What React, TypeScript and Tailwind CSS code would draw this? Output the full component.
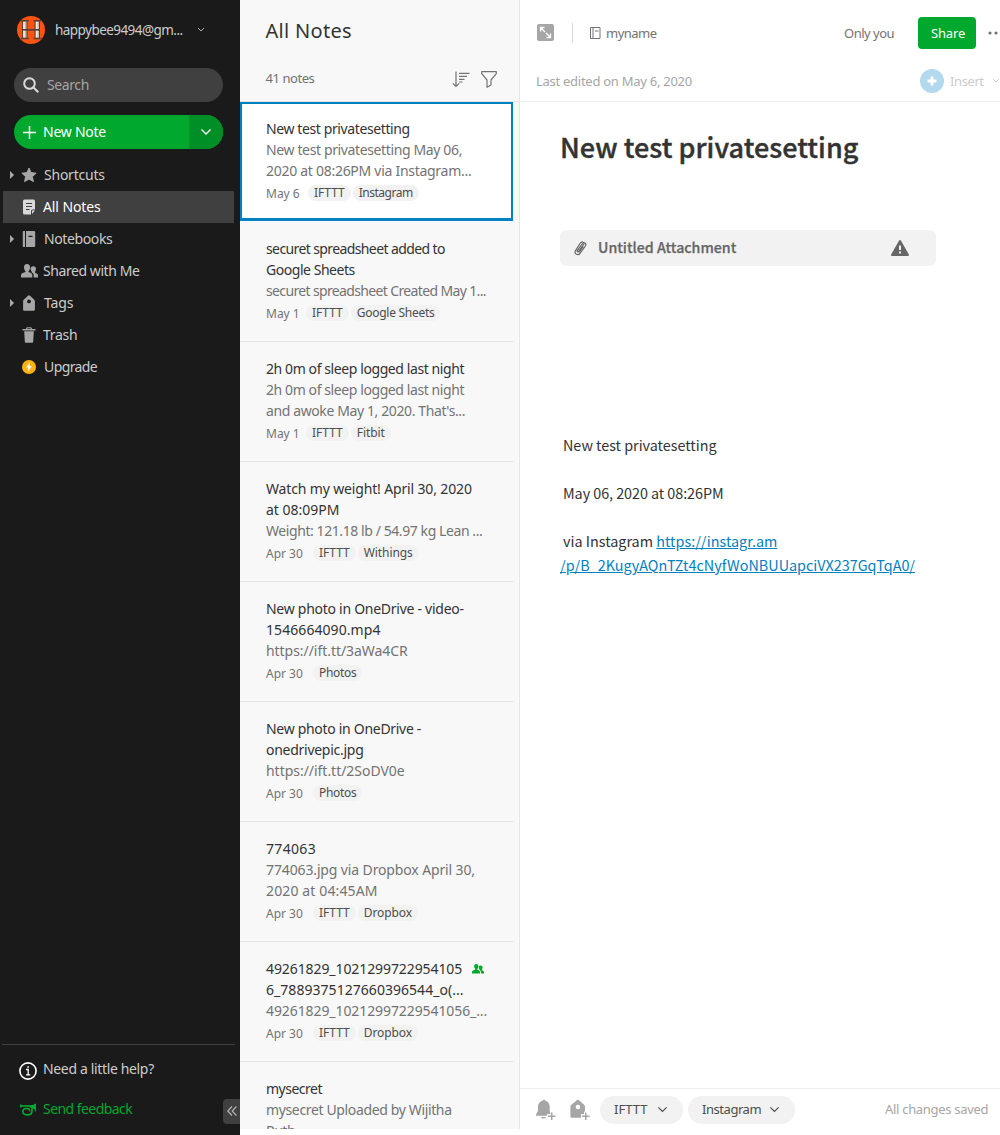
import React from "react";

/** A line of text with its letter spacing in pixels. */
type Line = [text: string, tracking: number];
type Note = { title: Line[]; body: Line[]; date?: string; tags: string[]; shared?: boolean };

const notes: Note[] = [
  { title: [["New test privatesetting", -0.39]], body: [["New test privatesetting May 06,", -0.37], ["2020 at 08:26PM via Instagram...", -0.28]], date: "May 6", tags: ["IFTTT", "Instagram"] },
  { title: [["securet spreadsheet added to", -0.61], ["Google Sheets", -0.46]], body: [["securet spreadsheet Created May 1...", -0.64]], date: "May 1", tags: ["IFTTT", "Google Sheets"] },
  { title: [["2h 0m of sleep logged last night", -0.41]], body: [["2h 0m of sleep logged last night", -0.41], ["and awoke May 1, 2020. That's...", -0.39]], date: "May 1", tags: ["IFTTT", "Fitbit"] },
  { title: [["Watch my weight! April 30, 2020", -0.15], ["at 08:09PM", 0]], body: [["Weight: 121.18 lb / 54.97 kg Lean ...", -0.42]], date: "Apr 30", tags: ["IFTTT", "Withings"] },
  { title: [["New photo in OneDrive - video-", -0.27], ["1546664090.mp4", 0.07]], body: [["https://ift.tt/3aWa4CR", -0.05]], date: "Apr 30", tags: ["Photos"] },
  { title: [["New photo in OneDrive -", -0.3], ["onedrivepic.jpg", -0.27]], body: [["https://ift.tt/2SoDV0e", -0.03]], date: "Apr 30", tags: ["Photos"] },
  { title: [["774063", 0.33]], body: [["774063.jpg via Dropbox April 30,", -0.13], ["2020 at 04:45AM", 0.13]], date: "Apr 30", tags: ["IFTTT", "Dropbox"] },
  { title: [["49261829_1021299722954105", -0.09], ["6_7889375127660396544_o(...", 0.04]], body: [["49261829_10212997229541056_...", -0.09]], date: "Apr 30", tags: ["IFTTT", "Dropbox"], shared: true },
  { title: [["mysecret", -0.5]], body: [["mysecret Uploaded by Wijitha", -0.36], ["Ruth", -0.5]], tags: [] },
];

const dateWidth: Record<string, string> = { "May 6": "w-[42px]", "May 1": "w-[40px]", "Apr 30": "w-[47px]" };
const tagTracking: Record<string, string> = {
  IFTTT: "",
  Instagram: "tracking-[-0.5px]",
  "Google Sheets": "tracking-[-0.28px]",
  Photos: "tracking-[-0.3px]",
};

function Chevron({ className = "" }: { className?: string }) {
  return (
    <svg viewBox="0 0 12 8" className={className} fill="none" stroke="currentColor" strokeWidth="1.3">
      <path d="M1.5 1.500 6 6l4.500-4.500" />
    </svg>
  );
}

function People({ className = "" }: { className?: string }) {
  return (
    <svg viewBox="0 0 17 14" className={className} fill="currentColor">
      <path d="M6 0C3.900 0 2.800 1.600 3 3.700c.1 1.500.7 2.600 1.400 3.200v1.200C2.600 8.800.3 9.300 0 11v2.600h11.300V11c-.3-1.700-2-2.200-3.700-2.900V6.900C8.400 6.300 9 5.200 9.100 3.700 9.200 1.600 8.100 0 6 0Z" />
      <path d="M12.200 2.200c-1.700 0-2.700 1.200-2.600 2.900.1 1.100.5 1.900 1.100 2.500v.8c1.200.6 1.900 1.400 2 2.600v2.600H17V11c-.2-1.300-1.500-1.700-3-2.300v-1c.6-.6 1-1.500 1-2.600.1-1.700-1-2.900-2.800-2.900Z" />
    </svg>
  );
}

const StarIcon = (
  <svg width="16" height="16" viewBox="0 0 16 16" fill="currentColor" stroke="currentColor" strokeLinejoin="round">
    <path d="m8 1 2.100 4.600 5 .6-3.700 3.400 1 5L8 12.100l-4.400 2.500 1-5L.9 6.200l5-.6Z" />
  </svg>
);
const NoteIcon = (
  <svg width="14" height="16" viewBox="0 0 14 16" fill="currentColor">
    <path fillRule="evenodd" d="M2.500.500h9A1.500 1.500 0 0 1 13 2v8.500h-2.500A1.500 1.500 0 0 0 9 12v3.500H2.500A1.500 1.500 0 0 1 1 14V2A1.500 1.500 0 0 1 2.500.500ZM4 4v1h6V4Zm0 3v1h6V7Zm0 3v1h3.500v-1Z" />
    <path d="M10 11.500h3L10 15Z" />
  </svg>
);
const BookIcon = (
  <svg width="14" height="16" viewBox="0 0 14 16" fill="currentColor">
    <path d="M1.500 0H3v16H1.500A.7.700 0 0 1 .8 15.300V.7A.7.700 0 0 1 1.500 0Z" />
    <path fillRule="evenodd" d="M4 0h8a1.200 1.200 0 0 1 1.200 1.200v13.600A1.200 1.200 0 0 1 12 16H4ZM6.500 4.700v1.400h4V4.700Z" />
  </svg>
);
const TagIcon = (
  <svg width="14" height="16" viewBox="0 0 14 16" fill="currentColor">
    <path fillRule="evenodd" d="M6 .7a1.500 1.500 0 0 1 2 0l4.300 4c.4.400.6.900.6 1.400v8.400c0 .8-.5 1.300-1.300 1.300H2.400c-.8 0-1.300-.5-1.300-1.300V6.100c0-.5.200-1 .6-1.400ZM7 4.500a1.900 1.900 0 1 0 0 3.800 1.900 1.900 0 0 0 0-3.800Z" />
  </svg>
);
const TrashIcon = (
  <svg width="14" height="16" viewBox="0 0 14 16" fill="currentColor">
    <path d="M5.500.300h3c1 0 1.500.7 1.500 1.700h3.500v1.500H.500V2H4C4 1 4.500.300 5.500.300Zm.2 1L5.300 2h3.400l-.4-.7Z" fillRule="evenodd" />
    <path d="M2.200 4.300h9.600l-.6 10.200c0 .8-.5 1.300-1.200 1.300H4c-.7 0-1.200-.5-1.200-1.300Z" />
  </svg>
);
const UpgradeIcon = (
  <svg width="14" height="14" viewBox="0 0 14 14">
    <circle cx="7" cy="7" r="7" fill="#ffb30f" />
    <path d="M7.900 2.400 4.100 7.600h2.200l-.3 4 3.900-5.400H7.600Z" fill="#fff" />
  </svg>
);

const nav = [
  { label: "Shortcuts", icon: StarIcon, arrow: true, text: "pl-1.5 tracking-[-0.23px]" },
  { label: "All Notes", icon: NoteIcon, active: true, text: "pl-[5px] tracking-[-0.1px]" },
  { label: "Notebooks", icon: BookIcon, arrow: true, text: "pl-1.5 tracking-[-0.38px]" },
  { label: "Shared with Me", icon: <People className="h-3.5 w-[17px]" />, text: "pl-[5px] tracking-[-0.43px]" },
  { label: "Tags", icon: TagIcon, arrow: true, text: "pl-1.5 tracking-[-0.1px]" },
  { label: "Trash", icon: TrashIcon, text: "pl-[5px] tracking-[-0.3px]" },
  { label: "Upgrade", icon: UpgradeIcon, text: "pl-1.5 tracking-[-0.6px]" },
];

function Avatar() {
  return (
    <svg width="28" height="28" viewBox="0 0 28 28" className="shrink-0">
      <circle cx="14" cy="14" r="14" fill="#fb5310" />
      <path d="M5.500 4.500H10v18H5.500ZM18 4.500h4.500v18H18Z" fill="#bdb9ad" stroke="#6b3a2b" />
      <path d="M7 6v15.500M19.800 6v15.500" stroke="#f4efe2" strokeWidth="1.600" />
      <path d="M5.500 13.800h17" stroke="#4a3f3a" strokeWidth="1.600" />
      <path d="M3.800 4.700h8M16.500 4.700h8M3.800 22.500h8M16.500 22.500h8" stroke="#5a4038" strokeWidth="1.500" />
    </svg>
  );
}

function Sidebar() {
  return (
    <aside className="flex w-60 shrink-0 flex-col bg-[#1a1a1a] text-[14px] text-[#ccc]">
      <div className="flex h-[60px] items-center pl-[17px]">
        <Avatar />
        <span className="mt-px ml-2.5 w-[132px] text-[13.5px] tracking-[-0.55px] whitespace-nowrap">happybee9494@gm...</span>
        <Chevron className="ml-2.5 w-2" />
      </div>
      <div className="mt-2 ml-3.5 flex h-[34px] w-[209px] items-center rounded-full bg-[#404040] text-[#a6a6a6]">
        <svg width="16" height="16" viewBox="0 0 16 16" className="ml-[9px] text-[#d9d9d9]" fill="none" stroke="currentColor" strokeWidth="2">
          <circle cx="6.500" cy="6.500" r="5.300" />
          <path d="m10.500 10.500 4.800 4.800" />
        </svg>
        <span className="-mt-px ml-2 tracking-[-0.4px]">Search</span>
      </div>
      <div className="mt-[13px] ml-3.5 flex h-[34px] w-[209px] overflow-hidden rounded-full bg-[#00a82d] text-white">
        <div className="flex w-[175px] items-center pl-[9px]">
          <svg width="13" height="13" viewBox="0 0 13 13" stroke="white" strokeWidth="1.500"><path d="M6.500 0v13M0 6.500h13" /></svg>
          <span className="-mt-px ml-[7px] tracking-[-0.25px]">New Note</span>
        </div>
        <div className="flex flex-1 items-center justify-center bg-[#008f26]"><Chevron className="w-3" /></div>
      </div>
      <nav className="mt-2.5 flex flex-col">
        {nav.map((n) => (
          <div key={n.label} className={n.active ? "ml-[3px] flex h-8 w-[231px] items-center bg-[#404040] text-white" : "ml-[3px] flex h-8 w-[231px] items-center"}>
            <span className="flex w-[17px] pl-[7px] text-[#ababab]">
              {n.arrow && <svg width="4" height="8" viewBox="0 0 4 8" fill="currentColor"><path d="m0 0 4 4-4 4Z" /></svg>}
            </span>
            <span className={n.active ? "flex w-[18px] justify-center text-[#d9d9d9]" : "flex w-[18px] justify-center text-[#a6a6a6]"}>{n.icon}</span>
            <span className="-mt-px"><span className={n.text}>{n.label}</span></span>
          </div>
        ))}
      </nav>
      <div className="mt-auto ml-0.5 h-[91px] w-[233px] border-t border-[#404040]">
        <div className="flex h-[50px] items-center pl-[17px]">
          <svg width="18" height="18" viewBox="0 0 18 18" className="mt-px" fill="none" stroke="#fff" strokeWidth="1.600">
            <circle cx="9" cy="9" r="8.100" />
            <path d="M7 7.500h2.200v5M7 12.900h4.300" strokeWidth="1.300" />
            <path d="M8.300 4.200h1.600v1.500H8.300Z" fill="#fff" stroke="none" />
          </svg>
          <span className="-mt-1 ml-1.5 tracking-[-0.35px]">Need a little help?</span>
        </div>
        <div className="flex h-[30px] items-center pl-[18px] text-[#00a82d]">
          <svg width="16" height="13" viewBox="0 0 16 13" className="-mt-px" fill="none" stroke="currentColor">
            <path d="M.500 3h8" strokeWidth="1.600" />
            <path d="M8 2.300c3.500 0 5.500-.5 8-1.800v9c-.8-2.500-2-4-4.200-4.600L8 3.800Z" fill="currentColor" stroke="none" />
            <path d="M12 4.500v3.300c0 2.300-1.500 4-3.700 4H6.500c-2.200 0-3.700-1.400-3.700-3.300S4.200 5.500 6 5.500h1.800c1.100 0 1.700.6 1.700 1.500v1.300" strokeWidth="1.700" />
            <path d="M.8 1.500v3" strokeWidth="1.500" />
          </svg>
          <span className="-mt-1 ml-[7px] tracking-[-0.55px]">Send feedback</span>
          <span className="ml-auto -mr-[5px] flex h-[25px] w-[17px] translate-y-px items-center justify-center rounded-l bg-[#404040] text-[#b5b5b5]">
            <svg width="10" height="10" viewBox="0 0 10 10" fill="none" stroke="currentColor" strokeWidth="1.200"><path d="M5 .5.8 5 5 9.500M9.400.5 5.200 5l4.200 4.500" /></svg>
          </span>
        </div>
      </div>
    </aside>
  );
}

function NoteCard({ note, selected }: { note: Note; selected: boolean }) {
  return (
    <div className={selected ? "mb-px h-[119px] w-[273px] shrink-0 border-2 border-b-[3px] border-[#0081c2] bg-white pt-[14px] pl-6" : "h-[120px] w-[273px] shrink-0 border-b border-[#e3e3e3] pt-4 pl-[26px]"}>
      <div className="relative h-[63px] text-[14px] leading-[21px] whitespace-nowrap text-[#737373]">
        {note.title.map(([text, tracking]) => <div key={text} className="text-[#333]" style={{ letterSpacing: tracking }}>{text}</div>)}
        {note.body.map(([text, tracking]) => <div key={text} style={{ letterSpacing: tracking }}>{text}</div>)}
        {note.shared && <People className="absolute top-[6px] left-[206px] w-3 text-[#00a82d]" />}
      </div>
      {note.date && (
        <div className="mt-1 flex h-4 text-[12px] leading-4 whitespace-nowrap text-[#737373]">
          <span className={dateWidth[note.date]}><span className="relative top-px">{note.date}</span></span>
          {note.tags.map((t) => (
            <span key={t} className="mr-0.5 rounded-full bg-[#f2f2f2] px-1.5 text-[#4d4d4d]"><span className={tagTracking[t] ?? "tracking-[-0.1px]"}>{t}</span></span>
          ))}
        </div>
      )}
    </div>
  );
}

function NoteList() {
  return (
    <section className="flex h-[1129px] w-[280px] shrink-0 flex-col overflow-hidden border-r border-[#e6e6e6] bg-[#f8f8f8]">
      <div className="h-[102px] shrink-0 border-b border-[#e6e6e6] pt-[17px]">
        <h1 className="ml-[25.5px] text-[20px] leading-7 tracking-[0.3px] text-[#333]">All Notes</h1>
        <div className="mt-5 flex h-7 items-center pl-[25.5px] text-[13px] text-[#737373]">
          <span className="w-[186px] tracking-[-0.45px]">41 notes</span>
          <svg width="18" height="17" viewBox="0 0 18 17" fill="none" stroke="currentColor" strokeWidth="1.200">
            <path d="M4 .5v15M.8 12.300 4 15.500l3.200-3.200M7 2.300h10.500M7 5.300h8M7 8.300h5.500M7 11h3.500" />
          </svg>
          <svg width="16" height="17" viewBox="0 0 16 17" className="ml-[11px]" fill="none" stroke="currentColor" strokeWidth="1.200" strokeLinejoin="round">
            <path d="M.7.700h14.600v2L10 9v5l-4 2.300V9L.7 2.700Z" />
          </svg>
        </div>
      </div>
      {notes.map((n, i) => <NoteCard key={i} note={n} selected={i === 0} />)}
    </section>
  );
}

function Editor() {
  return (
    <main className="flex min-w-0 flex-1 flex-col overflow-hidden bg-white text-[13px] text-[#737373]">
      <header className="h-[102px] shrink-0 border-b border-[#ededed]">
        <div className="flex h-[66px] items-center pl-[17px]">
          <svg width="17" height="17" viewBox="0 0 17 17" className="-mt-0.5 shrink-0">
            <rect width="17" height="17" rx="2" fill="#a6a6a6" />
            <path d="M3.500 7.500v-4h4M4 4l4 4M9.500 13.500h4v-4M9 9l4 4" stroke="#fff" strokeWidth="1.300" fill="none" />
          </svg>
          <span className="ml-[18px] h-5 w-px shrink-0 bg-[#d9d9d9]" />
          <svg width="11" height="12" viewBox="0 0 11 12" className="ml-[17px] shrink-0" fill="none" stroke="currentColor">
            <path d="M.5.500h9.500v11H.5ZM3 .5v11M5 4h3.500" />
          </svg>
          <span className="mt-px ml-[5px] w-[238px] shrink-0 tracking-[-0.5px]">myname</span>
          <span className="mt-px w-[51px] shrink-0 tracking-[-0.5px] whitespace-nowrap">Only you</span>
          <span className="ml-[23px] flex h-8 w-[58px] shrink-0 items-center justify-center rounded bg-[#00a82d] pt-px pl-0.5 tracking-[-0.15px] text-white">Share</span>
          <svg width="12" height="4" viewBox="0 0 12 4" className="ml-3 shrink-0" fill="currentColor"><circle cx="2" cy="2" r="1.600" /><circle cx="8" cy="2" r="1.600" /></svg>
        </div>
        <div className="flex h-[30px] items-center pl-4 text-[#a6a6a6]">
          <span className="mt-px w-[384px] shrink-0 tracking-[-0.27px]">Last edited on May 6, 2020</span>
          <svg width="24" height="24" viewBox="0 0 24 24" className="shrink-0"><circle cx="12" cy="12" r="12" fill="#b2d9ed" /><path d="M12 7.500v9M7.500 12h9" stroke="#fff" strokeWidth="2.800" /></svg>
          <span className="mt-px ml-1.5 w-[42px] shrink-0 tracking-[-0.4px] text-[#ccc]">Insert</span>
          <Chevron className="w-2 shrink-0 text-[#ccc]" />
        </div>
      </header>
      <div className="flex flex-1 flex-col pl-10 font-['Noto_Sans_CJK_SC',sans-serif]">
        <h2 className="mt-[25px] text-[27px] leading-10 font-medium tracking-[0.03px] text-[#333] [-webkit-text-stroke:0.4px_#333]">New test privatesetting</h2>
        <div className="mt-[63px] flex h-9 w-[376px] items-center rounded-md bg-[#f2f2f2] pl-3.5 text-[14.2px] font-medium text-[#666] [-webkit-text-stroke:0.25px_#666]">
          <svg width="13" height="15" viewBox="0 0 13 15" fill="none" stroke="#666" strokeWidth="1.200" strokeLinecap="round">
            <path d="m10 3-5.500 7.500c-.5.700-1.700 0-1.200-.8L8.500 2.500C9.500 1 12.700 2 11.700 4.500L6 12.500c-2 2.300-5.800.5-4.700-2.500L6 2.500c.7-1 1.500-1.700 2.700-1.500M9 6l-3.700 5" />
          </svg>
          <span className="ml-[11px]">Untitled Attachment</span>
          <svg width="18" height="16" viewBox="0 0 18 16" className="mr-[27px] ml-auto">
            <path d="M9 1 17 15H1Z" fill="#666" stroke="#666" strokeWidth="2" strokeLinejoin="round" /><path d="M8 5.500h2V10H8ZM8 11.500h2v2H8Z" fill="#f2f2f2" />
          </svg>
        </div>
        <div className="mt-[167px] text-[14.38px] leading-6 whitespace-pre text-[#333]">
          <p className="mb-6 pl-[3px] tracking-[-0.02px]">New test privatesetting</p>
          <p className="mb-6 pl-[3px] tracking-[-0.06px]">May 06, 2020 at 08:26PM</p>
          <p className="pl-[3px]">via Instagram <a className="text-[#0081c2] underline">https://instagr.am</a></p>
          <p><a className="text-[#0081c2] underline">/p/B_2KugyAQnTZt4cNyfWoNBUUapciVX237GqTqA0/</a></p>
        </div>
      </div>
      <footer className="flex h-[47px] items-center border-t border-[#ededed] pb-[5px] pl-4">
        <svg width="20" height="21" viewBox="0 0 20 21" className="shrink-0" fill="#a6a6a6">
          <path d="M7 1.500C7.300.300 8.700.300 9 1.500c3 .8 4.700 3 4.700 6V12l1.300 3.500v1.200H0v-1.200L2 12V7.500c0-3 1.900-5.200 5-6ZM5 18h5c-1 2-4 2-5 0Z" />
          <path d="M14.500 12.500h3v3h2.500v5.500h-9v-6h3.500Z" fill="#fff" />
          <path d="M15 13.500h1.500v3h3V18h-3v3H15v-3h-3v-1.500h3Z" />
        </svg>
        <svg width="20" height="21" viewBox="0 0 20 21" className="ml-3.5 shrink-0" fill="#a6a6a6">
          <path fillRule="evenodd" d="M6.800 1.300c.8-.8 1.500-.8 2.300 0l5 4.500c.6.600.9 1.200.9 2v11H2c-1 0-1.600-.6-1.600-1.600V7.800c0-.8.300-1.400.9-2ZM8 5.700a2.300 2.300 0 1 0 0 4.600 2.300 2.300 0 0 0 0-4.600Z" />
          <path d="M14 12.500h6V21h-9v-6h3Z" fill="#fff" />
          <path d="M15 13.500h1.500v3h3V18h-3v3H15v-3h-3v-1.500h3Z" />
        </svg>
        <span className="ml-2.5 flex h-7 w-[83px] shrink-0 items-center justify-between rounded-full bg-[#f2f2f2] pr-[15px] pl-3.5 text-[#4d4d4d]">IFTTT<Chevron className="w-[11px]" /></span>
        <span className="ml-[5px] flex h-7 w-[107px] shrink-0 items-center justify-between rounded-full bg-[#f2f2f2] pr-[15px] pl-3.5 tracking-[-0.45px] text-[#4d4d4d]">Instagram<Chevron className="w-[11px]" /></span>
        <span className="ml-auto w-[115px] tracking-[-0.3px] whitespace-nowrap text-[#a6a6a6]">All changes saved</span>
      </footer>
    </main>
  );
}

export default function App() {
  return (
    <div className="relative flex h-[1135px] w-[1000px] overflow-hidden bg-white font-['Noto_Sans',sans-serif]">
      <Sidebar />
      <NoteList />
      <Editor />
    </div>
  );
}
